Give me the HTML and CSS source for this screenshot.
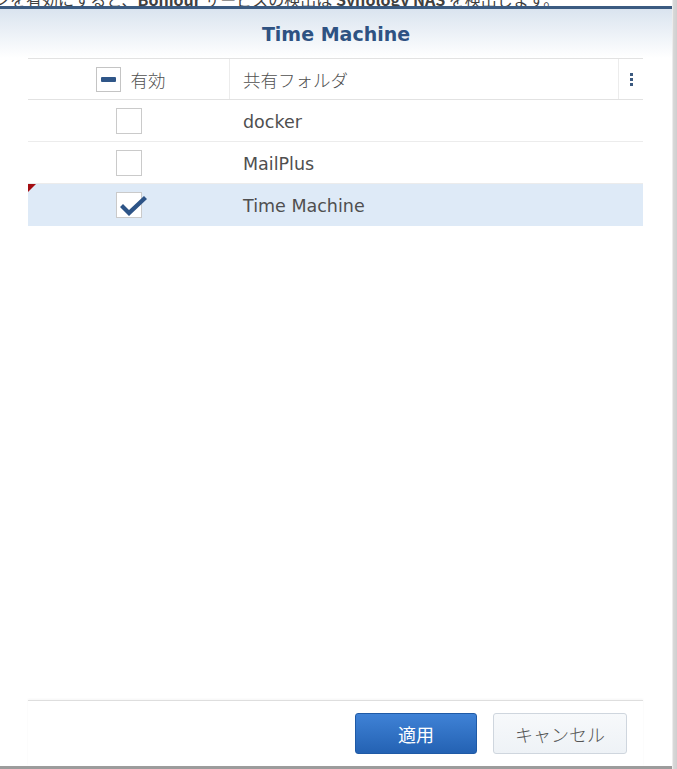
FILE: index.html
```html
<!DOCTYPE html>
<html lang="ja">
<head>
    <meta charset="UTF-8">
    <meta name="viewport" content="width=device-width, initial-scale=1.0">
    <title>Time Machine</title>
    <link rel="stylesheet" href="styles.css">
</head>
<body>
    <div class="screen">
        <div class="bg-note">
            <p>ンを有効にすると、<b>Bonjour</b> サービスの検出は <b>Synology NAS</b> を検出します。</p>
        </div>
        <div class="dialog">
            <div class="dialog-header">
                <h1>Time Machine</h1>
            </div>
            <div class="grid">
                <div class="grid-head">
                    <div class="col-enable">
                        <span class="checkbox partial"><span class="bar"></span></span>
                        <span class="head-label">有効</span>
                    </div>
                    <div class="col-name">共有フォルダ</div>
                    <div class="col-menu">
                        <span class="dots"><i></i><i></i><i></i></span>
                    </div>
                </div>
                <div class="grid-row">
                    <div class="col-enable"><span class="checkbox"></span></div>
                    <div class="col-name">docker</div>
                </div>
                <div class="grid-row">
                    <div class="col-enable"><span class="checkbox"></span></div>
                    <div class="col-name">MailPlus</div>
                </div>
                <div class="grid-row selected dirty">
                    <div class="col-enable">
                        <span class="checkbox">
                            <svg class="check" width="30" height="24" viewBox="0 0 30 24">
                                <path d="M2 12 L5 9 L11 15 L26 1 L29 4 L11 21 Z" fill="#2d5487"/>
                            </svg>
                        </span>
                    </div>
                    <div class="col-name">Time Machine</div>
                </div>
            </div>
            <div class="dialog-footer">
                <button class="btn btn-primary">適用</button>
                <button class="btn btn-default">キャンセル</button>
            </div>
        </div>
    </div>
</body>
</html>
```

FILE: styles.css
```css
* {
    box-sizing: border-box;
}

body {
    margin: 0;
    padding: 0;
    background: #fff;
    font-family: "DejaVu Sans", "Noto Sans CJK JP", sans-serif;
    color: #505050;
}

.screen {
    width: 677px;
    height: 769px;
    overflow: hidden;
    background: linear-gradient(to right, #fff 0, #fff 672px, #d9d9d9 673px, #cfcfcf 677px);
}

.bg-note {
    height: 6px;
    overflow: hidden;
}

.bg-note p {
    margin: -10px 0 0 -6px;
    font-size: 16px;
    line-height: 18px;
    white-space: nowrap;
    color: #404040;
    font-family: "Noto Sans CJK JP", sans-serif;
}

.dialog {
    width: 672px;
    height: 763px;
    background: #fff;
    border-top: 3px solid #3b5b81;
    border-bottom: 3px solid #9c9c9c;
    display: flex;
    flex-direction: column;
}

.dialog-header {
    height: 49px;
    display: flex;
    justify-content: center;
    align-items: center;
    background: linear-gradient(to bottom, #dae4ef, #fff);
}

.dialog-header h1 {
    margin: 0;
    font-size: 19px;
    font-weight: bold;
    color: #2e5282;
}

.grid {
    flex: 1;
    margin: 0 29px 0 28px;
}

.grid-head,
.grid-row {
    display: flex;
    height: 42px;
    border-bottom: 1px solid #ececec;
    position: relative;
}

.grid-head {
    border-top: 1px solid #e2e2e2;
    border-bottom-color: #e2e2e2;
}

.col-enable {
    width: 202px;
    display: flex;
    justify-content: center;
    align-items: center;
    gap: 10px;
}

.grid-head .col-enable {
    border-right: 1px solid #ececec;
    padding-left: 4px;
}

.col-name {
    flex: 1;
    display: flex;
    align-items: center;
    padding-left: 13px;
    font-size: 17.5px;
    color: #4f4f4f;
}

.grid-row .col-name {
    padding-top: 2px;
}

.grid-head .col-name,
.head-label {
    font-family: "Noto Sans CJK JP", sans-serif;
    font-size: 17.5px;
    font-weight: 300;
    color: #505050;
}

.col-menu {
    width: 25px;
    border-left: 1px solid #ececec;
    display: flex;
    justify-content: center;
    align-items: center;
}

.dots {
    display: flex;
    flex-direction: column;
    gap: 2px;
    padding-left: 1px;
}

.dots i {
    display: block;
    width: 3px;
    height: 3px;
    background: #3c5a80;
}

.checkbox {
    width: 26px;
    height: 26px;
    border: 1px solid #cacaca;
    background: #fff;
    display: flex;
    justify-content: center;
    align-items: center;
    position: relative;
}

.grid-head .checkbox {
    width: 25px;
    height: 25px;
    border-color: #c4c4c4;
}

.checkbox .bar {
    width: 15px;
    height: 5px;
    border-radius: 1px;
    background: #2f5688;
}

.checkbox .check {
    position: absolute;
    left: 1px;
    top: 2px;
    overflow: visible;
}

.grid-row.selected {
    background: #deeaf7;
    border-bottom-color: #deeaf7;
}

.grid-row.dirty::before {
    content: "";
    position: absolute;
    left: 0;
    top: 0;
    border-top: 8px solid #a30d12;
    border-right: 8px solid transparent;
}

.dialog-footer {
    margin: 0 29px 0 28px;
    border-top: 1px solid #dedede;
    box-shadow: 0 -1px 2px rgba(0, 0, 0, 0.04);
    display: flex;
    justify-content: flex-end;
    gap: 16px;
    padding: 12px 16px 12px 0;
}

.btn {
    height: 41px;
    border-radius: 3px;
    font-family: "Noto Sans CJK JP", sans-serif;
    font-size: 18px;
    cursor: pointer;
}

.btn-primary {
    width: 122px;
    border: 1px solid #1f5aa6;
    background: linear-gradient(to bottom, #3f82d6, #2462b3);
    color: #fff;
}

.btn-default {
    width: 134px;
    border: 1px solid #cfd6de;
    background: linear-gradient(to bottom, #f7f9fb, #eef2f6);
    color: #555;
    font-weight: 300;
}
```
